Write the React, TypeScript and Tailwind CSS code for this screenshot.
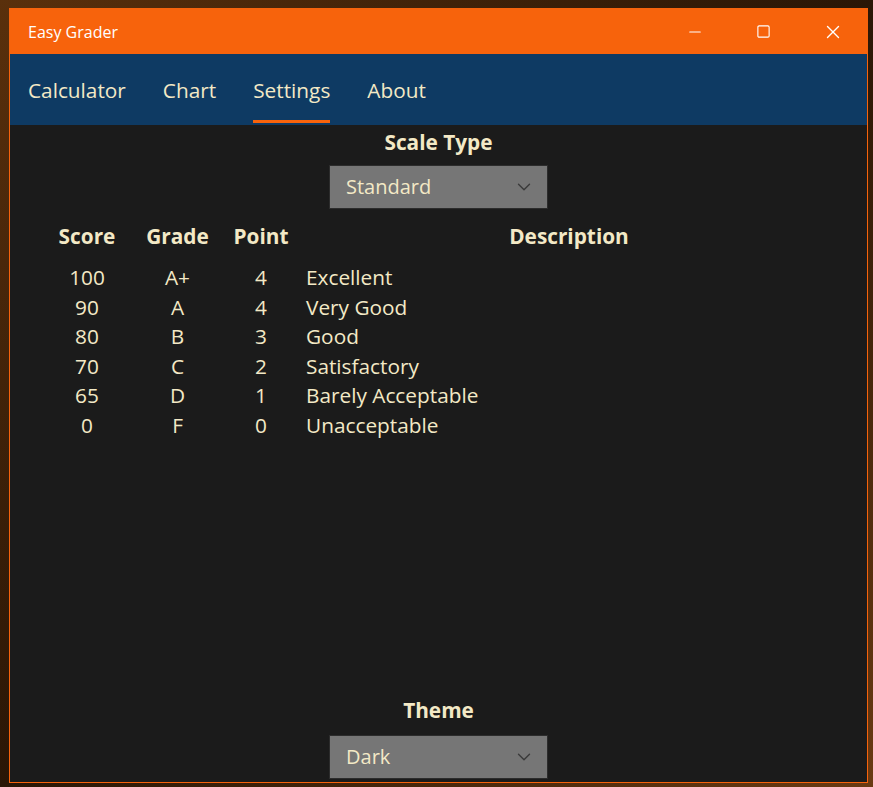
import { ChevronDown, Minus, Square, X } from 'lucide-react';

const rows = [
  { score: '100', grade: 'A+', point: '4', desc: 'Excellent' },
  { score: '90', grade: 'A', point: '4', desc: 'Very Good' },
  { score: '80', grade: 'B', point: '3', desc: 'Good' },
  { score: '70', grade: 'C', point: '2', desc: 'Satisfactory' },
  { score: '65', grade: 'D', point: '1', desc: 'Barely Acceptable' },
  { score: '0', grade: 'F', point: '0', desc: 'Unacceptable' },
];

const tabs = ['Calculator', 'Chart', 'Settings', 'About'];

function Select({ value }: { value: string }) {
  return (
    <div className="flex h-[44px] w-[219px] items-center justify-between border border-[#2c2c2c] bg-[#767676] pl-[16px] pr-[12px]">
      <span className="text-[20px] text-[#f3e9c6]">{value}</span>
      <ChevronDown className="h-[22px] w-[22px] text-[#3a3a3a]" strokeWidth={1.5} />
    </div>
  );
}

export default function App() {
  return (
    <div
      className="h-[787px] w-[873px] bg-gradient-to-br from-[#5a300c] via-[#2a1606] to-[#6a3a12] pl-[9px] pr-[5px] pt-[8px] pb-[4px]"
      style={{ fontFamily: '"Open Sans", "Noto Sans", sans-serif' }}
    >
      <div className="flex h-full w-full flex-col border border-[#f7630c] bg-[#1b1b1b]">
        {/* Title bar */}
        <div className="flex h-[45px] shrink-0 items-center bg-[#f7630c]">
          <span className="flex-1 pl-[18px] text-[16px] text-white">Easy Grader</span>
          <div className="flex h-full">
            <div className="flex w-[69px] items-center justify-center">
              <Minus className="h-[18px] w-[18px] text-white" strokeWidth={1.5} />
            </div>
            <div className="flex w-[69px] items-center justify-center">
              <Square className="h-[15px] w-[15px] text-white" strokeWidth={1.8} />
            </div>
            <div className="flex w-[69px] items-center justify-center">
              <X className="h-[22px] w-[22px] text-white" strokeWidth={1.5} />
            </div>
          </div>
        </div>

        {/* Tabs */}
        <div className="flex h-[71px] shrink-0 items-stretch gap-[37px] bg-[#0e3a63] pl-[18px]">
          {tabs.map((t) => (
            <div key={t} className="relative flex items-center pt-[2px] text-[20.8px] text-[#f3e9c6]">
              {t}
              {t === 'Settings' && (
                <div className="absolute bottom-[2px] left-0 right-0 h-[3px] bg-[#f7630c]" />
              )}
            </div>
          ))}
        </div>

        {/* Content */}
        <div className="flex flex-1 flex-col text-[#f3e9c6]">
          <div className="flex flex-col items-center pt-[2px]">
            <div className="text-[20.8px] font-bold leading-[30px]">Scale Type</div>
            <div className="mt-[8px]">
              <Select value="Standard" />
            </div>
          </div>

          <div className="mt-[12px] grid grid-cols-[90px_91px_76px_1fr] pl-[32px] pr-[28px] text-[20.8px]">
            <div className="text-center font-bold leading-[30px]">Score</div>
            <div className="text-center font-bold leading-[30px]">Grade</div>
            <div className="text-center font-bold leading-[30px]">Point</div>
            <div className="text-center font-bold leading-[30px]">Description</div>
            <div className="col-span-4 h-[12px]" />
            {rows.map((r) => (
              <div key={r.score} className="contents">
                <div className="text-center leading-[29.6px]">{r.score}</div>
                <div className="text-center leading-[29.6px]">{r.grade}</div>
                <div className="text-center leading-[29.6px]">{r.point}</div>
                <div className="pl-[7px] leading-[29.6px]">{r.desc}</div>
              </div>
            ))}
          </div>

          <div className="mt-auto flex flex-col items-center pb-[3px]">
            <div className="text-[20.8px] font-bold leading-[30px]">Theme</div>
            <div className="mt-[10px]">
              <Select value="Dark" />
            </div>
          </div>
        </div>
      </div>
    </div>
  );
}
